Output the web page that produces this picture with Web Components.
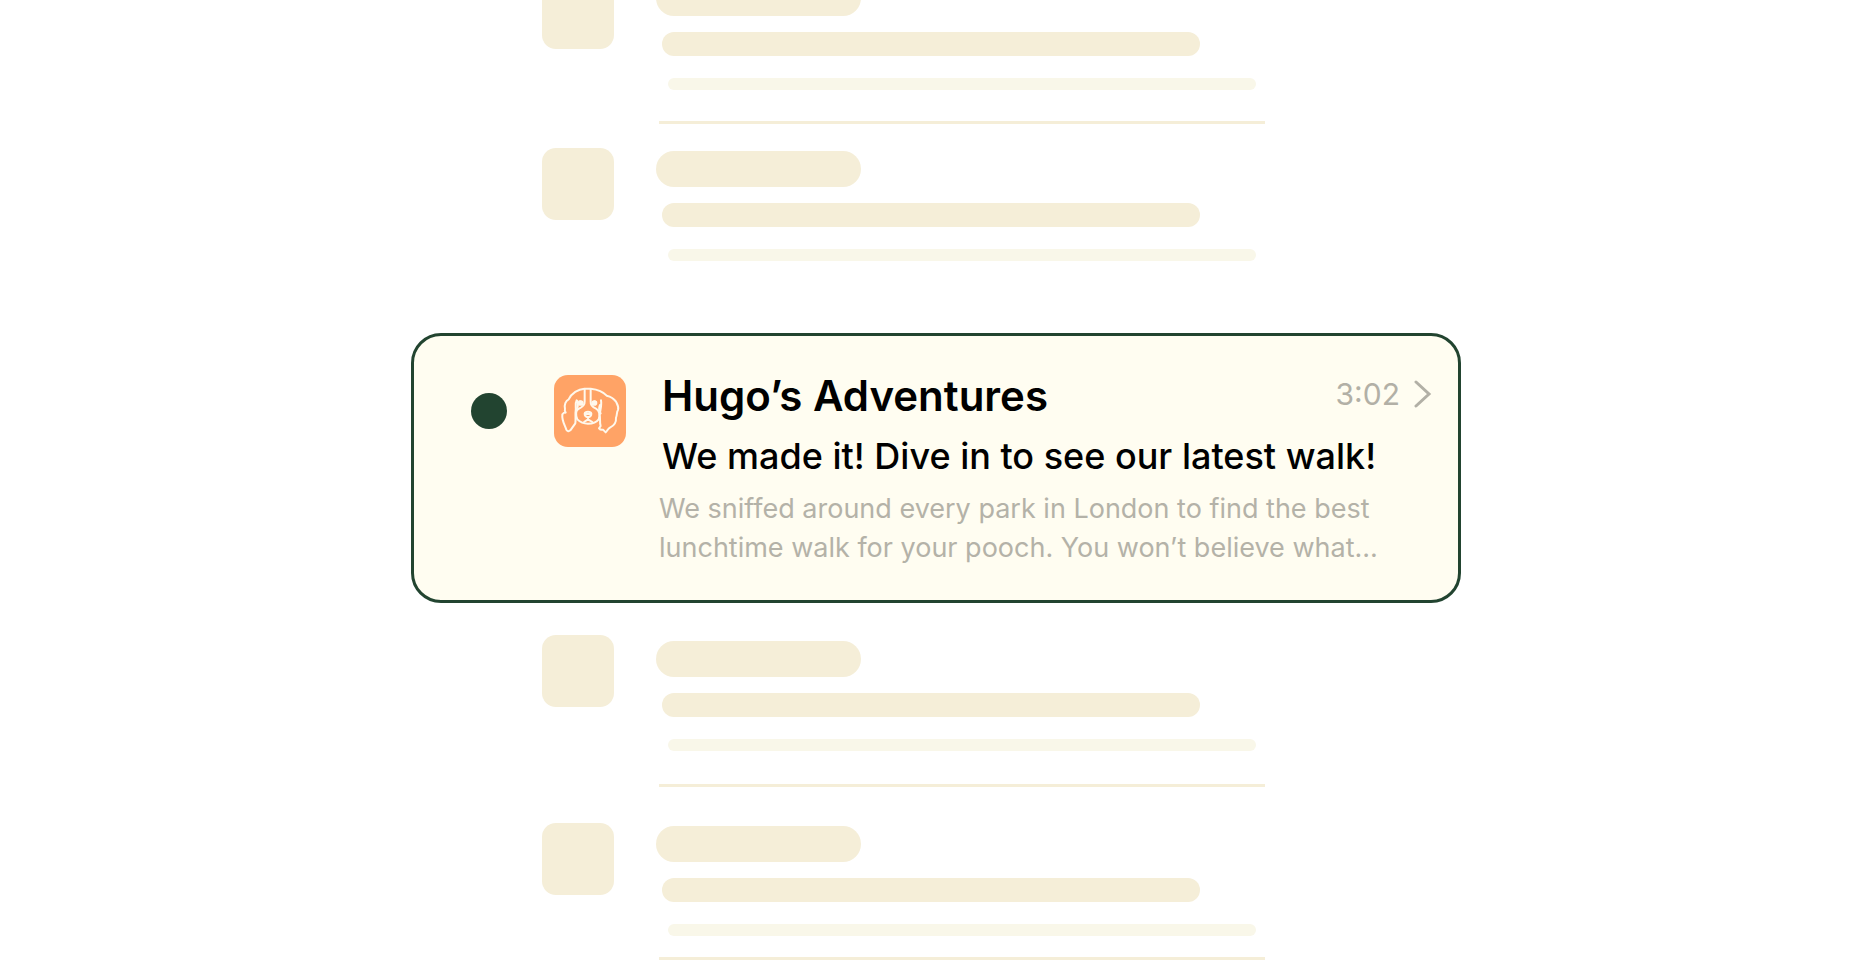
<!DOCTYPE html>
<html lang="en">
<head>
<meta charset="utf-8">
<meta name="viewport" content="width=device-width, initial-scale=1">
<title>Inbox</title>
<style>
  body { margin: 0; background: #fff; font-family: Inter, "Liberation Sans", sans-serif; }
</style>
</head>
<body>
<mail-inbox>
  <mail-placeholder class="cut"></mail-placeholder>
  <mail-placeholder class="plain"></mail-placeholder>
  <mail-card>
    <span slot="sender">Hugo’s Adventures</span>
    <span slot="time">3:02</span>
    <span slot="subject">We made it! Dive in to see our latest walk!</span>
    <span slot="preview">We sniffed around every park in London to find the best lunchtime walk for your pooch. You won’t believe what...</span>
    <dog-avatar slot="avatar"></dog-avatar>
  </mail-card>
  <mail-placeholder class="loose"></mail-placeholder>
  <mail-placeholder class="last"></mail-placeholder>
</mail-inbox>

<script>
class Base extends HTMLElement {
  constructor() {
    super();
    this.attachShadow({ mode: "open" }).innerHTML = this.constructor.markup;
  }
}

class MailInbox extends Base {
  static markup = `
    <style>
      :host { display: flex; flex-direction: column; width: 100%; max-width: 1050px;
        min-height: 100vh; margin: 0 auto; overflow: hidden; }
      ::slotted(.cut) { margin-top: -23px; }
      ::slotted(.plain) { --rule: none; margin-top: 24px; }
      ::slotted(mail-card) { margin-top: 72px; }
      ::slotted(.loose) { --bars-top: 6px; --rule-gap: 33px; margin-top: 32px; }
      ::slotted(.last) { --rule-gap: 21px; margin-top: 36px; }
    </style>
    <slot></slot>`;
}

class MailPlaceholder extends Base {
  static markup = `
    <style>
      :host { display: flex; align-items: flex-start; gap: 42px; padding: 0 196px 0 131px; }
      .avatar { flex: none; width: 72px; height: 72px; border-radius: 14px; background: #f5eed8; }
      .bars { flex: 1; padding-top: var(--bars-top, 3px); }
      .bars div { background: #f5eed8; }
      .name { max-width: 205px; height: 36px; border-radius: 18px; }
      .subject { height: 24px; border-radius: 12px; margin: 16px 65px 0 6px; }
      .bars .preview { height: 12px; border-radius: 6px; margin: 22px 9px 0 12px; background: #f9f7e9; }
      .bars .rule { display: var(--rule, block); height: 3px; margin: var(--rule-gap, 31px) 0 0 3px; }
    </style>
    <div class="avatar"></div>
    <div class="bars">
      <div class="name"></div>
      <div class="subject"></div>
      <div class="preview"></div>
      <div class="rule"></div>
    </div>`;
}

class MailCard extends Base {
  static markup = `
    <style>
      :host { display: block; }
      article { display: flex; align-items: flex-start; box-sizing: border-box; min-height: 270px;
        padding: 33px 26px 33px 57px; border: 3px solid #224430; border-radius: 30px; background: #fffdf1; }
      .unread { flex: none; width: 36px; height: 36px; margin: 24px 47px 0 0; border-radius: 50%; background: #224430; }
      ::slotted(dog-avatar) { flex: none; margin: 6px 33px 0 0; }
      .text { flex: 1; min-width: 0; }
      header { display: flex; align-items: flex-start; justify-content: space-between; padding-left: 3px; }
      h2 { margin: 0; font-size: 42px; line-height: 54px; font-weight: 600; color: #000; }
      .meta { display: flex; align-items: center; gap: 14px; font-size: 30px; line-height: 50px; color: #b2b0a6; }
      .meta svg { display: block; }
      .subject { margin: 6px 0 0; padding-left: 3px; font-size: 36px; line-height: 54px; font-weight: 500; color: #000; }
      .preview { margin: 6px 40px 0 0; font-size: 27px; line-height: 39px; color: #b4b2a8; }
    </style>
    <article>
      <span class="unread" role="img" aria-label="Unread"></span>
      <slot name="avatar"></slot>
      <div class="text">
        <header>
          <h2><slot name="sender"></slot></h2>
          <div class="meta">
            <time datetime="15:02"><slot name="time"></slot></time>
            <svg width="18" height="30" viewBox="0 0 18 30" fill="none" stroke="#b2b0a6" stroke-width="3" stroke-linecap="round" aria-hidden="true"><path d="M2 3 15 15 2 27"/></svg>
          </div>
        </header>
        <p class="subject"><slot name="subject"></slot></p>
        <p class="preview"><slot name="preview"></slot></p>
      </div>
    </article>`;
}

class DogAvatar extends Base {
  static markup = `
    <style>
      :host { display: block; width: 72px; height: 72px; border-radius: 14px; background: #ffa366; }
      svg { display: block; width: 100%; height: 100%; }
    </style>
    <svg viewBox="42 45 216 216" fill="none" stroke="#fff8ec" stroke-width="6" stroke-linejoin="round" stroke-linecap="round" role="img" aria-label="Dog">
      <path d="M106 190 C108 176 105 164 107 152 C109 142 104 132 110 121 M106 190 L91 211 Q84 217 79 209 C74 194 65 182 67 163 Q72 157 77 158 Q73 152 75 147 C72 135 77 122 86 118 C94 100 115 87 133 86 L152 86 C172 88 189 94 200 107 C213 110 222 116 228 125 C232 133 237 140 234 150 C229 157 232 165 228 173 C229 186 224 196 211 202 C203 206 203 211 197 217 L189 209 Q182 211 177 205 L182 198 C178 188 182 178 179 166 C180 151 186 136 183 121"/>
      <path d="M134 87 V125 C135 137 124 143 115 147 C107 153 107 166 112 178 C121 187 132 191 144 191 C158 191 170 186 176 178 C181 166 178 151 168 146 C156 141 151 136 152 125 V87"/>
      <path d="M134 161 Q135 155 144 155 Q153 155 154 161 C154 167 148 171 144 172 C139 171 134 167 134 161 M139 162 H149 M144 172 V178 L132 186 M144 178 L157 186"/>
      <path d="M180 135 Q174 149 182 160 M112 123 Q117 137 108 151"/>
      <ellipse cx="122" cy="129" rx="6" ry="5.500" fill="#fff8ec"/>
      <ellipse cx="163" cy="129" rx="6" ry="5.500" fill="#fff8ec"/>
      <path d="M117 123 Q122 121 127 125 M158 125 Q163 120 169 124" stroke-width="3"/>
    </svg>`;
}

customElements.define("mail-inbox", MailInbox);
customElements.define("mail-placeholder", MailPlaceholder);
customElements.define("dog-avatar", DogAvatar);
customElements.define("mail-card", MailCard);
</script>
</body>
</html>
